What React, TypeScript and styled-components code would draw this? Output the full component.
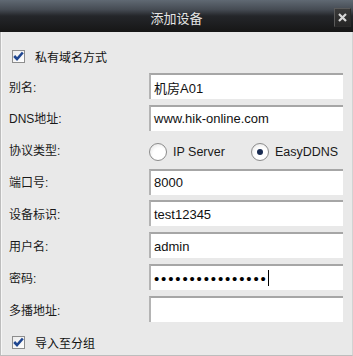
import React from "react";
import styled, { createGlobalStyle } from "styled-components";

const GlobalStyle = createGlobalStyle`
  html, body {
    margin: 0;
    padding: 0;
    background: #e9e9e9;
  }
  * {
    box-sizing: border-box;
  }
`;

const Window = styled.div`
  width: 353px;
  height: 356px;
  display: flex;
  flex-direction: column;
  font-family: "Liberation Sans", "Noto Sans CJK SC", sans-serif;
  color: #111;
`;

const TitleBar = styled.div`
  height: 32px;
  flex: none;
  display: grid;
  grid-template-columns: 1fr auto 1fr;
  align-items: center;
  background: linear-gradient(
    #606973 0%,
    #454b53 30%,
    #24262a 50%,
    #161616 100%
  );
`;

const Title = styled.div`
  grid-column: 2;
  font-family: "Noto Sans CJK SC", sans-serif;
  font-size: 13px;
  color: #e4e4e4;
  padding-top: 2px;
`;

const CloseButton = styled.div`
  grid-column: 3;
  justify-self: end;
  width: 17px;
  height: 19px;
  margin-right: 2px;
  margin-top: 3px;
  display: flex;
  align-items: center;
  justify-content: center;
  background: linear-gradient(#3a3a3a, #262626);
  border: 1px solid #5a5a5a;
  border-right-color: #2a2a2a;
  border-bottom-color: #2a2a2a;
`;

const Body = styled.div`
  flex: 1;
  display: flex;
  flex-direction: column;
  padding: 14px 9px 0 8px;
  background: #e9e9e9;
  border-left: 1px solid #bdbdbd;
  border-right: 1px solid #d2d2d2;
  border-bottom: 1px solid #bdbdbd;
  box-shadow: inset 1px 0 #f6f6f6;
`;

const CheckRow = styled.div<{ $gapTop?: number }>`
  height: 20px;
  display: flex;
  align-items: center;
  gap: 10px;
  padding-left: 3px;
  margin-top: ${({ $gapTop }) => $gapTop ?? 0}px;
  font-family: "Noto Sans CJK SC", sans-serif;
  font-size: 12px;
`;

const Box = styled.div`
  width: 13px;
  height: 13px;
  flex: none;
  display: flex;
  align-items: center;
  justify-content: center;
  background: linear-gradient(135deg, #ececec, #ffffff);
  border: 1px solid #8d8d8d;
`;

const Form = styled.div`
  display: grid;
  grid-template-columns: 140px 1fr;
  grid-auto-rows: 26px;
  row-gap: 5.86px;
  margin-top: 7px;
`;

const Label = styled.div`
  display: flex;
  align-items: center;
  font-family: "Liberation Sans", "Noto Sans CJK SC", sans-serif;
  font-size: 12px;
  color: #1a1a1a;
`;

const Field = styled.div`
  display: flex;
  align-items: center;
  padding-left: 3px;
  background: #fff;
  border-top: 2px solid #a6a6a6;
  border-left: 2px solid #b4b4b4;
  font-family: "Liberation Sans", "Noto Sans CJK SC", sans-serif;
  font-size: 13px;
  color: #111;
  white-space: nowrap;
  overflow: hidden;
`;

const Dots = styled.span`
  font-family: "Liberation Sans", sans-serif;
  font-size: 15px;
  letter-spacing: 1.85px;
  color: #000;
`;

const Caret = styled.span`
  width: 1px;
  height: 16px;
  margin-left: 0;
  background: #000;
`;

const RadioGroup = styled.div`
  display: grid;
  grid-template-columns: 102px 1fr;
  align-items: center;
  padding-top: 4px;
`;

const RadioOption = styled.div`
  display: flex;
  align-items: center;
  gap: 6px;
  font-size: 12.5px;
  color: #1a1a1a;
`;

const Circle = styled.div<{ $on?: boolean }>`
  width: 18px;
  height: 18px;
  border-radius: 50%;
  border: 1px solid #8c8c8c;
  background: radial-gradient(circle at 60% 65%, #ffffff 45%, #dedede 100%);
  display: flex;
  align-items: center;
  justify-content: center;
  &::after {
    content: "";
    display: ${({ $on }) => ($on ? "block" : "none")};
    width: 6px;
    height: 6px;
    border-radius: 50%;
    background: #1a2c52;
  }
`;

const Check = () => (
  <svg width="11" height="10" viewBox="0 0 11 10">
    <path d="M1.2 5 L4 8 L9.8 1.5" fill="none" stroke="#1f4690" strokeWidth="2.6" />
  </svg>
);

const CheckBox = ({ label, gapTop }: { label: string; gapTop?: number }) => (
  <CheckRow $gapTop={gapTop}>
    <Box>
      <Check />
    </Box>
    <span>{label}</span>
  </CheckRow>
);

const rows: { label: string; value?: string }[] = [
  { label: "别名:", value: "机房A01" },
  { label: "DNS地址:", value: "www.hik-online.com" },
];

const rowsAfter: { label: string; value?: string }[] = [
  { label: "端口号:", value: "8000" },
  { label: "设备标识:", value: "test12345" },
  { label: "用户名:", value: "admin" },
];

export default function App() {
  return (
    <>
      <GlobalStyle />
      <Window>
        <TitleBar>
          <Title>添加设备</Title>
          <CloseButton>
            <svg width="9" height="9" viewBox="0 0 9 9">
              <path d="M1 1 L8 8 M8 1 L1 8" stroke="#d8d8d8" strokeWidth="2.2" />
            </svg>
          </CloseButton>
        </TitleBar>
        <Body>
          <CheckBox label="私有域名方式" />
          <Form>
            {rows.map((r) => (
              <React.Fragment key={r.label}>
                <Label>{r.label}</Label>
                <Field>{r.value}</Field>
              </React.Fragment>
            ))}
            <Label>协议类型:</Label>
            <RadioGroup>
              <RadioOption>
                <Circle />
                IP Server
              </RadioOption>
              <RadioOption>
                <Circle $on />
                EasyDDNS
              </RadioOption>
            </RadioGroup>
            {rowsAfter.map((r) => (
              <React.Fragment key={r.label}>
                <Label>{r.label}</Label>
                <Field>{r.value}</Field>
              </React.Fragment>
            ))}
            <Label>密码:</Label>
            <Field>
              <Dots>{"•".repeat(16)}</Dots>
              <Caret />
            </Field>
            <Label>多播地址:</Label>
            <Field />
          </Form>
          <CheckBox label="导入至分组" gapTop={10} />
        </Body>
      </Window>
    </>
  );
}
